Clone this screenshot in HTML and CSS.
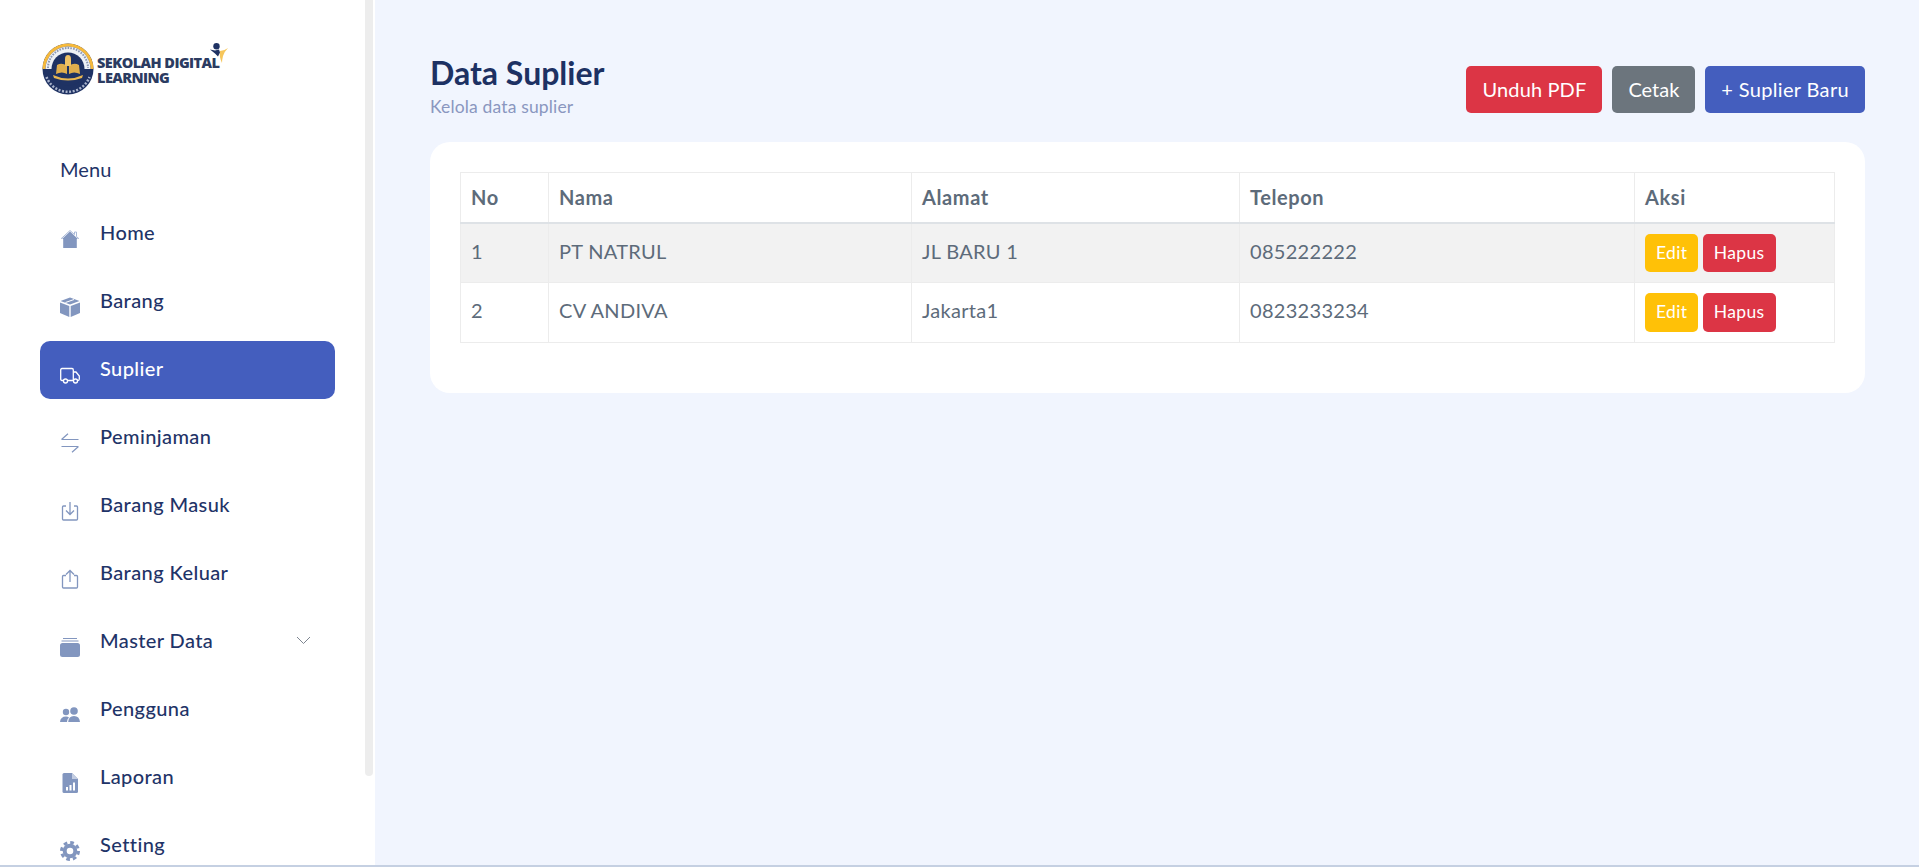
FILE: index.html
```html
<!DOCTYPE html>
<html lang="en">
<head>
    <meta charset="utf-8">
    <title>Data Suplier</title>
    <link rel="stylesheet" href="styles.css">
</head>
<body>
<div class="app">
    <aside class="sidebar">
        <div class="sidebar-inner">
            <div class="logo">
                <svg class="logo-badge" width="52" height="52" viewBox="0 0 52 52">
                    <circle cx="26" cy="26" r="25.500" fill="#1f3263"/>
                    <path d="M.5 26A25.500 25.500 0 0 1 51.500 26L48.500 26A22.500 22.500 0 0 0 3.500 26Z" fill="#f6b93b"/>
                    <path d="M3.500 26A22.500 22.500 0 0 1 48.500 26Z" fill="#eef1f5"/>
                    <path d="M6 25A20 20 0 0 1 46 25" fill="none" stroke="#8b97b3" stroke-width="2" stroke-dasharray="1.600 1.200"/>
                    <circle cx="26" cy="26" r="16.500" fill="#1f3263"/>
                    <path d="M4.500 34A23 23 0 0 0 47.500 34" fill="none" stroke="#aab4cc" stroke-width="2.500" stroke-dasharray="2 1.600"/>
                    <path d="M14 31q6-3 11 0v-8q-5-4-10-1ZM27 31q5-3 11 0l-1-9q-5-3-10 1Z" fill="#e0ae4d"/>
                    <path d="M23 23V16q0-4 3-4t3 4v7Z" fill="#f0c264"/>
                    <path d="M11 32q15 7 30 0l-1 3q-14 5-28 0Z" fill="#e8b651"/>
                </svg>
                <div class="logo-text">SEKOLAH DIGITAL<br>LEARNING</div>
                <svg class="logo-figure" width="18" height="20" viewBox="0 0 18 20">
                    <path d="M10 8q4 0 8-3-4 4-5 8t-1 7q-3-6-2-12Z" fill="#f6c65b"/>
                    <circle cx="6.500" cy="3.200" r="3.200" fill="#1f3263"/>
                    <path d="M0 6.500l5 1 4-1 1 3-2 4-3-3Z" fill="#1f3263"/>
                </svg>
            </div>
            <div class="menu-label">Menu</div>
            <nav class="nav">
                <a class="nav-item">
                    <svg class="nav-icon" viewBox="0 0 20 20"><path d="M10 2.500 18 10H16.800V19H3.200V10H2Z" fill="#8296bf"/><path d="M1 9.800 10 1.500 14.500 5.600V3H16.500V7.500L19 9.800" fill="none" stroke="#a9b9d8" stroke-width="1"/></svg>
                    <span>Home</span>
                </a>
                <a class="nav-item">
                    <svg class="nav-icon" viewBox="0 0 20 20"><path d="M10 .5 19.500 4 10 7.500 .5 4Z" fill="#8296bf"/><path d="M0 5.500 9.300 9V20L0 16Z" fill="#8296bf"/><path d="M20 5.500 10.700 9V20L20 16Z" fill="#8296bf"/><path d="M5.500 5.500 14 2.500" stroke="#fff" stroke-width="1"/></svg>
                    <span>Barang</span>
                </a>
                <a class="nav-item active">
                    <svg class="nav-icon" viewBox="0 0 20 20" fill="none" stroke="#fff" stroke-width="1.300"><path d="M3.500 15.500H2Q.7 15.500 .7 14V5Q.7 3.500 2 3.500H12Q13.300 3.500 13.300 5V15.500H7.500"/><path d="M13.300 7H16L19.300 11V14Q19.300 15.500 18 15.500H17.500M13.500 15.500H13.300"/><circle cx="5.500" cy="16" r="2"/><circle cx="15.500" cy="16" r="2"/></svg>
                    <span>Suplier</span>
                </a>
                <a class="nav-item">
                    <svg class="nav-icon" viewBox="0 0 20 20" fill="none" stroke="#8296bf" stroke-width="1.200"><path d="M1.500 6.500H18.500M8 .8 1.500 6.500"/><path d="M1.500 13.500H18.500M12 19.200 18.500 13.500"/></svg>
                    <span>Peminjaman</span>
                </a>
                <a class="nav-item">
                    <svg class="nav-icon" viewBox="0 0 20 20" fill="none" stroke="#8296bf" stroke-width="1.300"><path d="M6 5H3.500Q2.500 5 2.500 6V18Q2.500 19 3.500 19H16.500Q17.500 19 17.500 18V6Q17.500 5 16.500 5H14"/><path d="M10 1V13M6 9.500 10 13.500 14 9.500"/></svg>
                    <span>Barang Masuk</span>
                </a>
                <a class="nav-item">
                    <svg class="nav-icon" viewBox="0 0 20 20" fill="none" stroke="#8296bf" stroke-width="1.300"><path d="M6 6.500H3.500Q2.500 6.500 2.500 7.500V18Q2.500 19 3.500 19H16.500Q17.500 19 17.500 18V7.500Q17.500 6.500 16.500 6.500H14"/><path d="M10 13V1.500M6 5.500 10 1.500 14 5.500"/></svg>
                    <span>Barang Keluar</span>
                </a>
                <a class="nav-item">
                    <svg class="nav-icon" viewBox="0 0 20 20"><path d="M3 1H17V2H3ZM1.500 3.500H18.500V4.500H1.500Z" fill="#8296bf"/><rect y="6" width="20" height="14" rx="2.500" fill="#8296bf"/></svg>
                    <span>Master Data</span>
                    <svg class="chevron" width="15" height="9" viewBox="0 0 15 9"><path d="M1 1 7.500 7.500 14 1" fill="none" stroke="#7d8590" stroke-width="1"/></svg>
                </a>
                <a class="nav-item">
                    <svg class="nav-icon" viewBox="0 0 20 20"><circle cx="6" cy="7" r="3.200" fill="#8296bf"/><circle cx="14" cy="6" r="3.800" fill="#8296bf"/><path d="M0 17Q.5 11.500 6 11.500 8 11.500 9 12.500 7 14 7 17Z" fill="#8296bf"/><path d="M8.200 17Q8.500 11 14 11 19.500 11 20 17Z" fill="#8296bf"/></svg>
                    <span>Pengguna</span>
                </a>
                <a class="nav-item">
                    <svg class="nav-icon" viewBox="0 0 20 20"><path d="M4 0H12L18 6V18.500Q18 20 16.500 20H4Q2.500 20 2.500 18.500V1.500Q2.500 0 4 0Z" fill="#8296bf"/><path d="M12 0V6H18Z" fill="#c3cde2"/><path d="M6 14H8V17.500H6ZM9.500 12H11.500V17.500H9.500ZM13 9.500H15V17.500H13Z" fill="#fff"/></svg>
                    <span>Laporan</span>
                </a>
                <a class="nav-item">
                    <svg class="nav-icon" viewBox="0 0 20 20" fill="none" stroke="#8296bf"><circle cx="10" cy="10" r="5.300" stroke-width="4"/><circle cx="10" cy="10" r="8.500" stroke-width="3" stroke-dasharray="3.670 3"/></svg>
                    <span>Setting</span>
                </a>
            </nav>
        </div>
        <div class="scroll-thumb"></div>
    </aside>
    <main class="content">
        <div class="page-head">
            <div class="head-text">
                <h1 class="page-title">Data Suplier</h1>
                <p class="page-sub">Kelola data suplier</p>
            </div>
            <div class="head-actions">
                <button class="btn btn-red btn-pdf">Unduh PDF</button>
                <button class="btn btn-gray">Cetak</button>
                <button class="btn btn-blue">+ Suplier Baru</button>
            </div>
        </div>
        <div class="card">
            <table class="data-table">
                <colgroup>
                    <col class="col-no"><col class="col-nama"><col class="col-alamat"><col class="col-telepon"><col class="col-aksi">
                </colgroup>
                <thead>
                    <tr><th>No</th><th>Nama</th><th>Alamat</th><th>Telepon</th><th>Aksi</th></tr>
                </thead>
                <tbody>
                    <tr class="striped">
                        <td>1</td><td>PT NATRUL</td><td>JL BARU 1</td><td>085222222</td>
                        <td class="cell-actions"><button class="btn btn-sm btn-yellow">Edit</button> <button class="btn btn-sm btn-red">Hapus</button></td>
                    </tr>
                    <tr>
                        <td>2</td><td>CV ANDIVA</td><td>Jakarta1</td><td>0823233234</td>
                        <td class="cell-actions"><button class="btn btn-sm btn-yellow">Edit</button> <button class="btn btn-sm btn-red">Hapus</button></td>
                    </tr>
                </tbody>
            </table>
        </div>
    </main>
</div>
</body>
</html>
```

FILE: styles.css
```css
* {
    box-sizing: border-box;
}
html, body {
    margin: 0;
    height: 867px;
    overflow: hidden;
}
body {
    font-family: "Lato", "Open Sans", sans-serif;
    background-color: #f1f5fe;
    color: #5d6b7a;
}
.app {
    display: flex;
    height: 867px;
    border-bottom: 2px solid #c5d0e2;
}
.sidebar {
    width: 375px;
    flex-shrink: 0;
    display: flex;
    background-color: #fff;
    overflow: hidden;
}
.sidebar-inner {
    width: 365px;
    padding: 43px 30px 0 40px;
}
.scroll-thumb {
    width: 8px;
    height: 776px;
    background-color: #ededed;
    border-radius: 0 0 4px 4px;
}
.logo {
    display: flex;
    align-items: center;
    height: 52px;
    margin-left: 2px;
}
.logo-badge {
    flex-shrink: 0;
}
.logo-text {
    margin-left: 3px;
    margin-top: 1px;
    font-family: "Open Sans", sans-serif;
    font-weight: 800;
    font-size: 14.5px;
    line-height: 15px;
    letter-spacing: -0.55px;
    color: #2b3b61;
    white-space: nowrap;
}
.logo-figure {
    align-self: flex-start;
    margin-left: -9px;
}
.menu-label {
    margin-top: 59px;
    padding-left: 20px;
    font-size: 20px;
    line-height: 30px;
    letter-spacing: 0.1px;
    color: #1f3468;
}
.nav {
    margin-top: 21px;
}
.nav-item {
    display: flex;
    align-items: flex-start;
    height: 58px;
    margin-bottom: 10px;
    padding: 14px 20px 0;
    border-radius: 10px;
    font-size: 20px;
    font-weight: 500;
    line-height: 27px;
    letter-spacing: 0.4px;
    color: #1f3468;
}
.nav-item.active {
    background-color: #445ebe;
    color: #fff;
}
.nav-icon {
    width: 20px;
    height: 20px;
    margin-top: 10px;
    margin-right: 20px;
    flex-shrink: 0;
}
.chevron {
    margin-left: auto;
    margin-top: 9px;
    margin-right: 4px;
}
.content {
    flex: 1;
    padding: 55px 54px 0 55px;
}
.page-head {
    display: flex;
    justify-content: space-between;
    align-items: center;
    height: 68px;
    margin-bottom: 19px;
}
.head-text {
    margin-bottom: 4px;
}
.page-title {
    margin: 0;
    font-size: 32px;
    line-height: 38px;
    font-weight: 700;
    color: #1d3163;
}
.page-sub {
    margin: 2px 0 0;
    font-size: 17.5px;
    line-height: 26px;
    letter-spacing: 0.15px;
    color: #8a97c0;
}
.head-actions {
    display: flex;
    gap: 10px;
}
.btn {
    border: 1px solid transparent;
    border-radius: 5px;
    padding: 7.5px 15px;
    font-family: inherit;
    font-size: 20px;
    line-height: 30px;
    color: #fff;
}
.btn-pdf {
    letter-spacing: 0.13px;
}
.btn-blue {
    letter-spacing: 0.34px;
}
.btn-sm {
    padding: 5px 10px;
    font-size: 17.5px;
    line-height: 26.25px;
    letter-spacing: 0.35px;
    vertical-align: middle;
}
.btn-red {
    background-color: #dc3545;
}
.btn-gray {
    background-color: #6c757d;
}
.btn-blue {
    background-color: #445ebe;
}
.btn-yellow {
    background-color: #ffc107;
}
.card {
    background-color: #fff;
    border-radius: 20px;
    padding: 30px 30px 50px;
}
.data-table {
    width: 100%;
    table-layout: fixed;
    border-collapse: collapse;
    font-size: 20px;
    line-height: 30px;
    letter-spacing: 0.3px;
}
.col-no { width: 88px; }
.col-nama { width: 363px; }
.col-alamat { width: 328px; }
.col-telepon { width: 395px; }
.data-table th, .data-table td {
    border: 1px solid #ececec;
    padding: 10px;
    text-align: left;
}
.data-table th {
    padding: 9px 10px 10px;
    font-weight: 700;
    letter-spacing: 0.6px;
    border-bottom: 2px solid #dee2e6;
}
.data-table td {
    vertical-align: top;
    padding-top: 12px;
}
.data-table td.cell-actions {
    padding-top: 10px;
    word-spacing: -1px;
}
.striped {
    background-color: #f2f2f2;
}
```
